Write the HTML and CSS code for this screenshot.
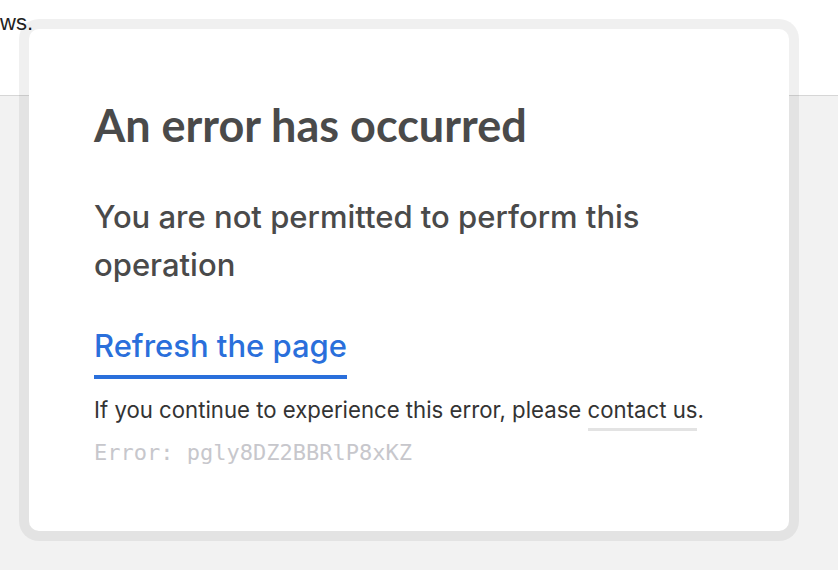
FILE: index.html
```html
<!DOCTYPE html>
<html lang="en">
<head>
<meta charset="UTF-8">
<meta name="viewport" content="width=device-width, initial-scale=1.0">
<title>Error</title>
<link rel="stylesheet" href="styles.css">
</head>
<body>
    <!-- page behind the dialog -->
    <div id="page-top">
        <p class="intro">ws.</p>
    </div>
    <div id="page-rest"></div>

    <!-- error dialog -->
    <div id="error-dialog">
        <h1 class="error-title">An error has occurred</h1>
        <p class="error-message">You are not permitted to perform this operation</p>
        <a class="refresh-link" href="#">Refresh the page</a>
        <p class="help-text">If you continue to experience this error, please <a class="contact-link" href="#">contact us</a>.</p>
        <div class="error-code">Error: pgly8DZ2BBRlP8xKZ</div>
    </div>
</body>
</html>
```

FILE: styles.css
```css
body {
    margin: 0;
    background-color: #f2f2f2;
    font-family: Inter, 'Noto Sans', sans-serif;
    height: 570px;
    overflow: hidden;
}
#page-top {
    height: 95px;
    background-color: #ffffff;
    border-bottom: 1px solid #d6d6d6;
    overflow: hidden;
}
.intro {
    margin: 10px 0 0 0;
    font-family: 'Liberation Sans', Arial, sans-serif;
    font-size: 22px;
    color: #222222;
}
#error-dialog {
    position: absolute;
    left: 19px;
    top: 19px;
    width: 760px;
    height: 502px;
    border: 10px solid rgba(0, 0, 0, 0.06);
    border-radius: 20px;
    background-color: #ffffff;
    background-clip: padding-box;
    display: flex;
    flex-direction: column;
    align-items: flex-start;
}
#error-dialog > * {
    margin-left: 65px;
}
.error-title {
    margin-top: 72px;
    margin-bottom: 0;
    font-family: Lato, sans-serif;
    font-weight: 700;
    font-size: 45px;
    line-height: 48px;
    color: #4a4a4a;
}
.error-message {
    margin-top: 44px;
    margin-bottom: 0;
    width: 640px;
    font-size: 31px;
    font-weight: 500;
    line-height: 48px;
    color: #4a4a4a;
}
.refresh-link {
    margin-top: 37px;
    padding-bottom: 9px;
    font-size: 31px;
    font-weight: 500;
    line-height: 40px;
    color: #2a6fdb;
    text-decoration: none;
    border-bottom: 4px solid #2a6fdb;
}
.help-text {
    margin-top: 17px;
    margin-bottom: 0;
    font-size: 22.2px;
    line-height: 28px;
    color: #333333;
}
.contact-link {
    color: #333333;
    text-decoration: none;
    border-bottom: 3px solid #e3e3e3;
    padding-bottom: 5px;
}
.error-code {
    margin-top: 14px;
    font-family: 'DejaVu Sans Mono', 'Liberation Mono', monospace;
    font-size: 22px;
    line-height: 30px;
    color: #c7c7cc;
}
```
